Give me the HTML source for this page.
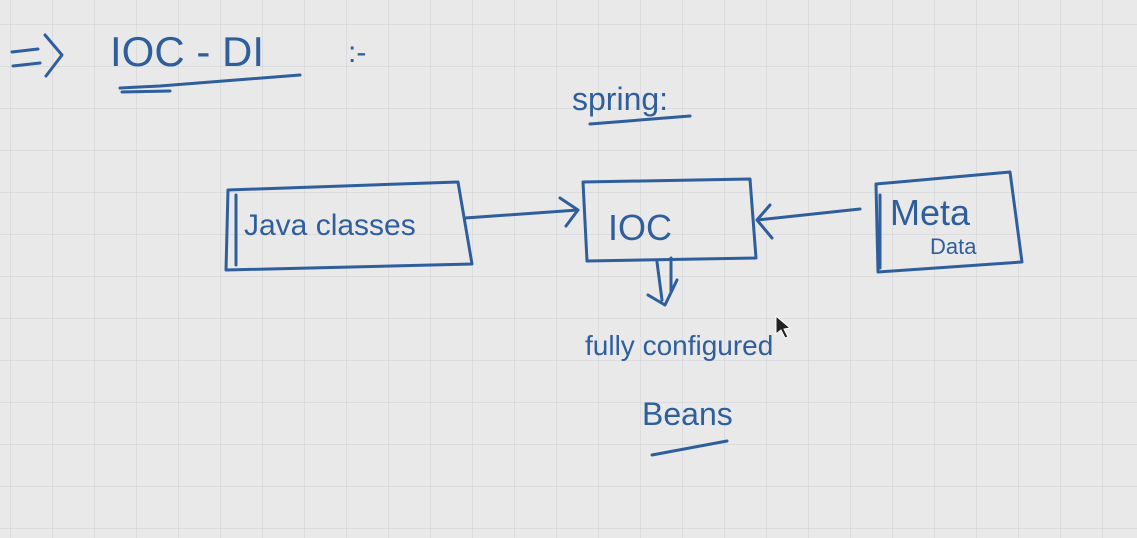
<!DOCTYPE html>
<html><head><meta charset="utf-8"><style>
html,body{margin:0;padding:0;width:1137px;height:538px;overflow:hidden;background:#e9e9ea}
svg{display:block}
text{font-family:"Liberation Sans",sans-serif;fill:#2f5e9c}
</style></head><body>
<svg width="1137" height="538" viewBox="0 0 1137 538">
<defs><pattern id="g" x="10" y="24" width="42" height="42" patternUnits="userSpaceOnUse">
<path d="M0 0V42M0 0H42" stroke="#d6d7d9" stroke-width="1.5" fill="none"/></pattern></defs>
<rect width="1137" height="538" fill="#e9e9ea"/>
<rect width="1137" height="538" fill="url(#g)"/>
<g stroke="#2f5e9c" stroke-width="3" fill="none" stroke-linecap="round" stroke-linejoin="round">
<path d="M12 52L38 49M13 66L40 63M45 35L62 55L46 76"/>
<path d="M120 88L160 86L300 75"/><path d="M122 92L170 91"/>
<path d="M590 124L690 116"/>
<path d="M228 190L458 182L472 264L226 270Z"/><path d="M236 195V265"/>
<path d="M465 218L578 210M560 198L578 210L566 226"/>
<path d="M583 182L750 179L756 258L587 261Z"/>
<path d="M860 209L757 220M770 205L757 220L772 238"/>
<path d="M876 184L1010 172L1022 262L878 272Z"/><path d="M880 195V268"/>
<path d="M657 262L662 300M671 258L671 292M648 295L665 305L677 280"/>
<path d="M652 455L727 441"/>
</g>
<text x="110" y="66" font-size="42">IOC - DI</text>
<text x="348" y="62" font-size="30">:-</text>
<text x="572" y="110" font-size="32">spring:</text>
<text x="244" y="235" font-size="30">Java classes</text>
<text x="608" y="240" font-size="36">IOC</text>
<text x="890" y="225" font-size="36">Meta</text>
<text x="930" y="254" font-size="22">Data</text>
<text x="585" y="355" font-size="28">fully configured</text>
<text x="642" y="425" font-size="32">Beans</text>
<path d="M776 316L776 334L781 330L785 338L788 337L784 329L790 328Z" fill="#222" stroke="#fff" stroke-width="1"/>
</svg>
</body></html>
